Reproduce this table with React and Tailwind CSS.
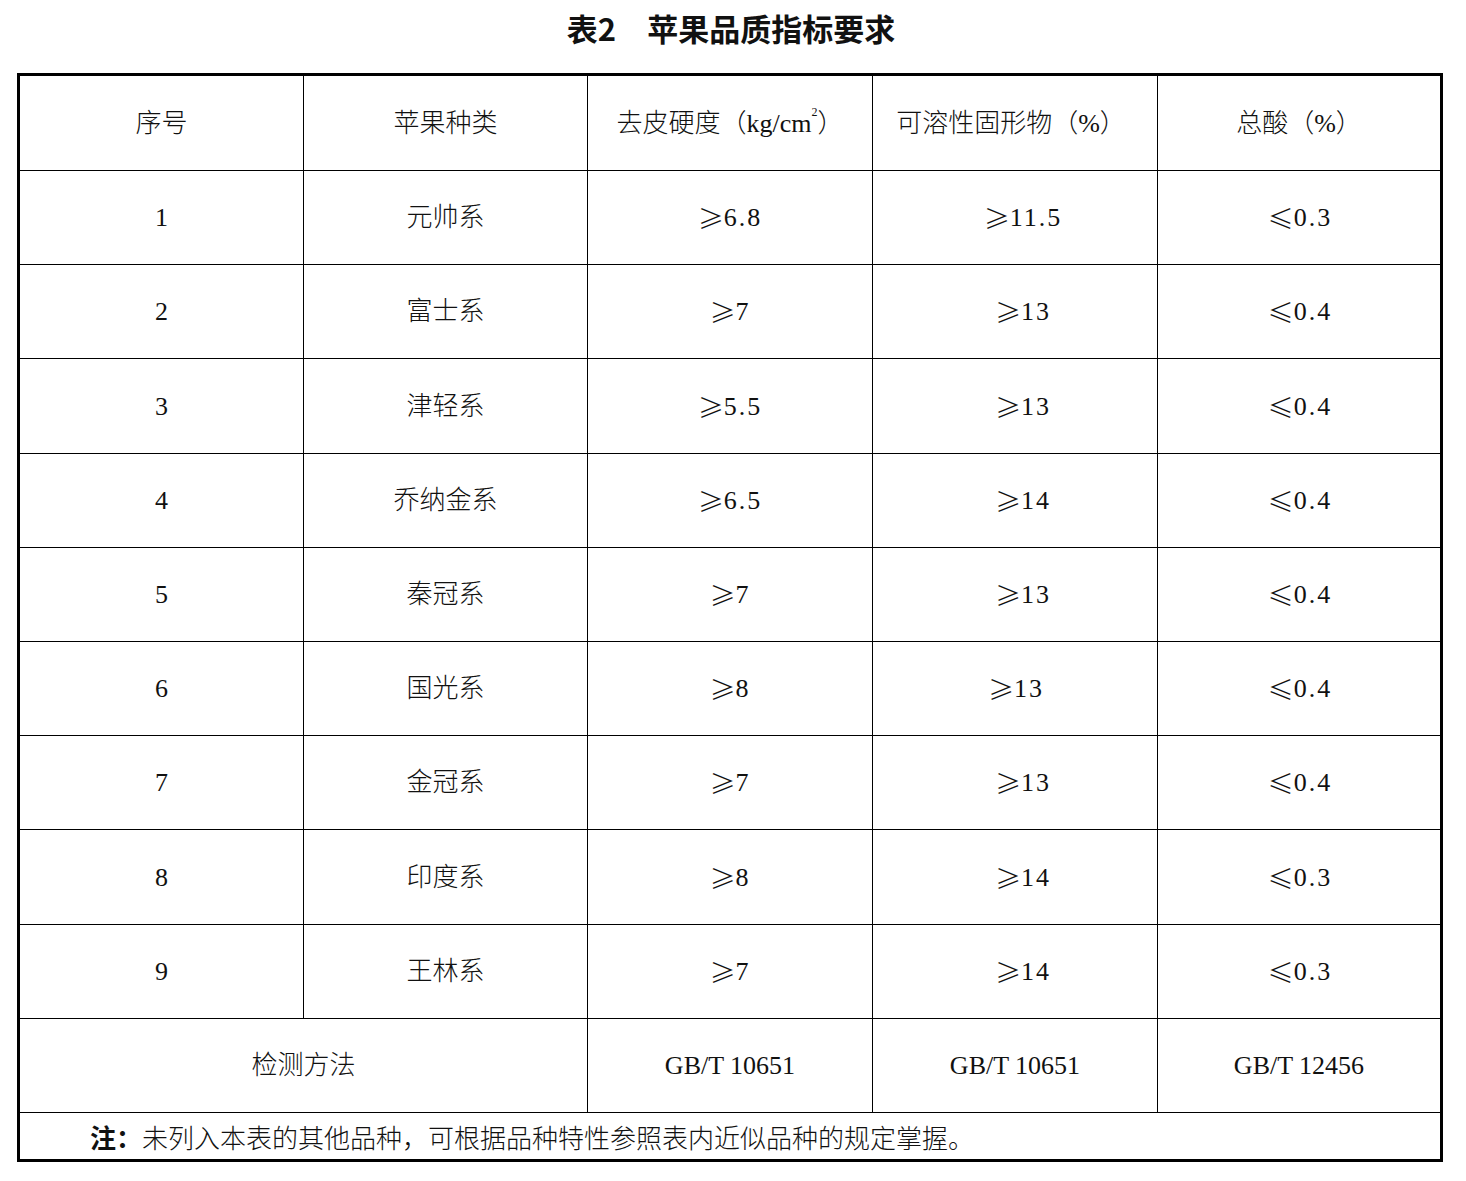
import React from "react";

const rows = [
  ["1", "元帅系", "≥6.8", "≥11.5", "≤0.3"],
  ["2", "富士系", "≥7", "≥13", "≤0.4"],
  ["3", "津轻系", "≥5.5", "≥13", "≤0.4"],
  ["4", "乔纳金系", "≥6.5", "≥14", "≤0.4"],
  ["5", "秦冠系", "≥7", "≥13", "≤0.4"],
  ["6", "国光系", "≥8", "≥13", "≤0.4"],
  ["7", "金冠系", "≥7", "≥13", "≤0.4"],
  ["8", "印度系", "≥8", "≥14", "≤0.3"],
  ["9", "王林系", "≥7", "≥14", "≤0.3"],
];

// row heights incl. bottom rule, taken from the scan
const heights = ["h-[94px]", "h-[94px]", "h-[95px]", "h-[94px]", "h-[94px]", "h-[94px]", "h-[94px]", "h-[95px]", "h-[94px]"];

// ≥ / ≤ come from the CJK font so they are full width like the original
const Value = ({ text }) => (
  <>
    <span className="font-['Noto_Sans_CJK_SC',sans-serif]">{text[0]}</span>
    <span className="tracking-[2px]">{text.slice(1)}</span>
  </>
);

const Cell = ({ children, last = false, className = "" }) => (
  <div
    className={`flex items-center justify-center border-b border-black ${
      last ? "" : "border-r"
    } ${className}`}
  >
    {children}
  </div>
);

export default function App() {
  return (
    <div className="min-h-screen bg-white text-[#111] font-['Liberation_Serif','Noto_Sans_CJK_SC',serif]">
      <h1 className="h-[55px] flex items-center justify-center pr-[4px] pt-[1px] text-[31px] font-bold font-['Noto_Sans_CJK_SC',sans-serif]">
        表2　苹果品质指标要求
      </h1>

      <div className="ml-[17px] mt-[18px] w-[1426px] border-[3px] border-black">
        <div className="grid grid-cols-[284px_284px_285px_285px_1fr] text-[26px] font-light">
          {/* header */}
          <Cell className="h-[95px]">序号</Cell>
          <Cell className="h-[95px]">苹果种类</Cell>
          <Cell className="h-[95px]">
            去皮硬度（kg/cm<sup className="text-[12px] -top-[0.9em]">2</sup>）
          </Cell>
          <Cell className="h-[95px] pr-[8px]">可溶性固形物（%）</Cell>
          <Cell className="h-[95px]" last>
            总酸（%）
          </Cell>

          {rows.map((r, i) => (
            <React.Fragment key={r[0]}>
              <Cell className={heights[i]}>{r[0]}</Cell>
              <Cell className={heights[i]}>{r[1]}</Cell>
              <Cell className={heights[i]}>
                <Value text={r[2]} />
              </Cell>
              <Cell className={`${heights[i]} ${r[0] === "6" ? "pl-[2px]" : "pl-[16px]"}`}>
                <Value text={r[3]} />
              </Cell>
              <Cell className={`${heights[i]} pl-[2px]`} last>
                <Value text={r[4]} />
              </Cell>
            </React.Fragment>
          ))}

          {/* test methods */}
          <Cell className="col-span-2 h-[94px]">检测方法</Cell>
          <Cell className="h-[94px]">GB/T 10651</Cell>
          <Cell className="h-[94px]">GB/T 10651</Cell>
          <Cell className="h-[94px]" last>
            GB/T 12456
          </Cell>

          {/* note */}
          <div className="col-span-5 h-[46px] flex items-center pl-[70px] font-['Noto_Sans_CJK_SC',sans-serif]">
            <span className="font-bold">注：</span>
            未列入本表的其他品种，可根据品种特性参照表内近似品种的规定掌握。
          </div>
        </div>
      </div>
    </div>
  );
}
